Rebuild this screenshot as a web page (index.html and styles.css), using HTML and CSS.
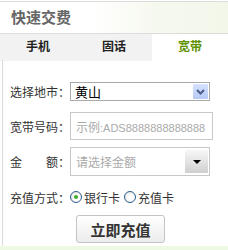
FILE: index.html
```html
<!DOCTYPE html>
<html lang="zh">
<head>
<meta charset="utf-8">
<link rel="stylesheet" href="styles.css">
</head>
<body>
<div class="panel">
  <div class="header">快速交费</div>
  <div class="tabs">
    <div class="tab">手机</div>
    <div class="tab">固话</div>
    <div class="tab active">宽带</div>
  </div>
  <div class="form">
    <div class="row r1">
      <span class="label">选择地市：</span>
      <div class="select">
        <span class="sel-text">黄山</span>
        <span class="sel-btn">
          <svg width="9" height="6" viewBox="0 0 9 6"><path d="M1 1 L4.5 4.5 L8 1" fill="none" stroke="#4a5f8a" stroke-width="2"/></svg>
        </span>
      </div>
    </div>
    <div class="row r2">
      <span class="label">宽带号码：</span>
      <div class="input"><span class="ph">示例<span class="latin">:ADS8888888888888</span></span></div>
    </div>
    <div class="row r3">
      <span class="label">金　　额：</span>
      <div class="combo">
        <span class="ph">请选择金额</span>
        <span class="combo-btn"><span class="tri"></span></span>
      </div>
    </div>
    <div class="row r4">
      <span class="label">充值方式：</span>
      <span class="radio checked"></span><span class="rtext">银行卡</span>
      <span class="radio"></span><span class="rtext">充值卡</span>
    </div>
    <div class="row r5">
      <div class="btn">立即充值</div>
    </div>
  </div>
  <div class="foot"></div>
</div>
</body>
</html>
```

FILE: styles.css
```css
html, body {
  margin: 0;
  padding: 0;
  background: #fff;
}
body {
  padding-top: 1px;
  font-family: "Liberation Sans", "Noto Sans CJK SC", sans-serif;
  font-size: 12px;
  color: #333;
  width: 228px;
  height: 249px;
  overflow: hidden;
}
.panel {
  display: flex;
  flex-direction: column;
}
.header {
  height: 31px;
  border-top: 1px solid #dcdcdc;
  border-bottom: 1px solid #dcdcdc;
  background: linear-gradient(to right, #ffffff 0%, #ffffff 40%, #f5f8ee 70%, #f3f7ea 100%);
  font-size: 15px;
  font-weight: bold;
  color: #666;
  line-height: 31px;
  padding-left: 11px;
}
.tabs {
  display: grid;
  grid-template-columns: 76px 76px 76px;
  height: 26px;
}
.tab {
  background: #f2f2f2;
  font-weight: bold;
  font-size: 12px;
  color: #222;
  text-align: center;
  line-height: 27px;
}
.tab.active {
  background: #fff;
  color: #5f9200;
}
.form {
  margin-left: 2px;
  border-left: 1px solid #dadada;
  padding-top: 22px;
  padding-bottom: 3px;
  display: flex;
  flex-direction: column;
}
.row {
  display: flex;
  align-items: center;
  padding-left: 7px;
}
.label {
  width: 60px;
  flex: none;
  white-space: nowrap;
  color: #333;
}
.r1 { height: 19px; }
.r2 { height: 28px; margin-top: 11px; }
.r3 { height: 29px; margin-top: 7px; }
.r4 { height: 20px; margin-top: 11px; }
.r5 { height: 28px; margin-top: 8px; padding-left: 73px; }

.select {
  box-sizing: border-box;
  width: 140px;
  height: 19px;
  border: 1px solid #a9a9a9;
  display: flex;
  align-items: center;
  justify-content: space-between;
  padding: 1px;
}
.sel-text {
  font-size: 13px;
  color: #000;
  padding-left: 3px;
}
.sel-btn {
  width: 15px;
  height: 15px;
  background: linear-gradient(#d6e1fd, #b6c8f6);
  display: flex;
  align-items: center;
  justify-content: center;
  border-radius: 1px;
}
.input {
  box-sizing: border-box;
  width: 143px;
  height: 28px;
  border: 1px solid #c8c8c8;
  display: flex;
  align-items: center;
  padding-left: 5px;
  overflow: hidden;
}
.ph {
  color: #aaa;
  white-space: nowrap;
}
.latin {
  font-size: 11px;
}
.combo {
  box-sizing: border-box;
  width: 140px;
  height: 29px;
  border: 1px solid #c8c8c8;
  display: flex;
  align-items: center;
  justify-content: space-between;
  padding: 3px 1px 3px 5px;
}
.combo-btn {
  width: 23px;
  height: 23px;
  background: linear-gradient(#f7f7f7, #cfcfcf);
  display: flex;
  align-items: center;
  justify-content: center;
}
.tri {
  width: 0;
  height: 0;
  border-left: 4px solid transparent;
  border-right: 4px solid transparent;
  border-top: 4px solid #000;
}
.radio {
  box-sizing: border-box;
  width: 12px;
  height: 12px;
  border-radius: 50%;
  border: 1px solid #2a5d8f;
  background: radial-gradient(circle at 60% 60%, #ffffff 30%, #dcdcd6 100%);
  display: inline-flex;
  align-items: center;
  justify-content: center;
  flex: none;
}
.radio.checked::after {
  content: "";
  width: 4px;
  height: 4px;
  border-radius: 50%;
  background: #3fae29;
}
.rtext {
  margin-left: 2px;
  margin-right: 4px;
  color: #333;
}
.btn {
  box-sizing: border-box;
  width: 89px;
  height: 28px;
  border: 1px solid #c4c4c4;
  border-radius: 3px;
  background: linear-gradient(#ffffff, #ececec);
  font-size: 15px;
  font-weight: bold;
  color: #333;
  display: flex;
  align-items: center;
  justify-content: center;
}
.foot {
  height: 4px;
  background: #eef9e4;
}
```
